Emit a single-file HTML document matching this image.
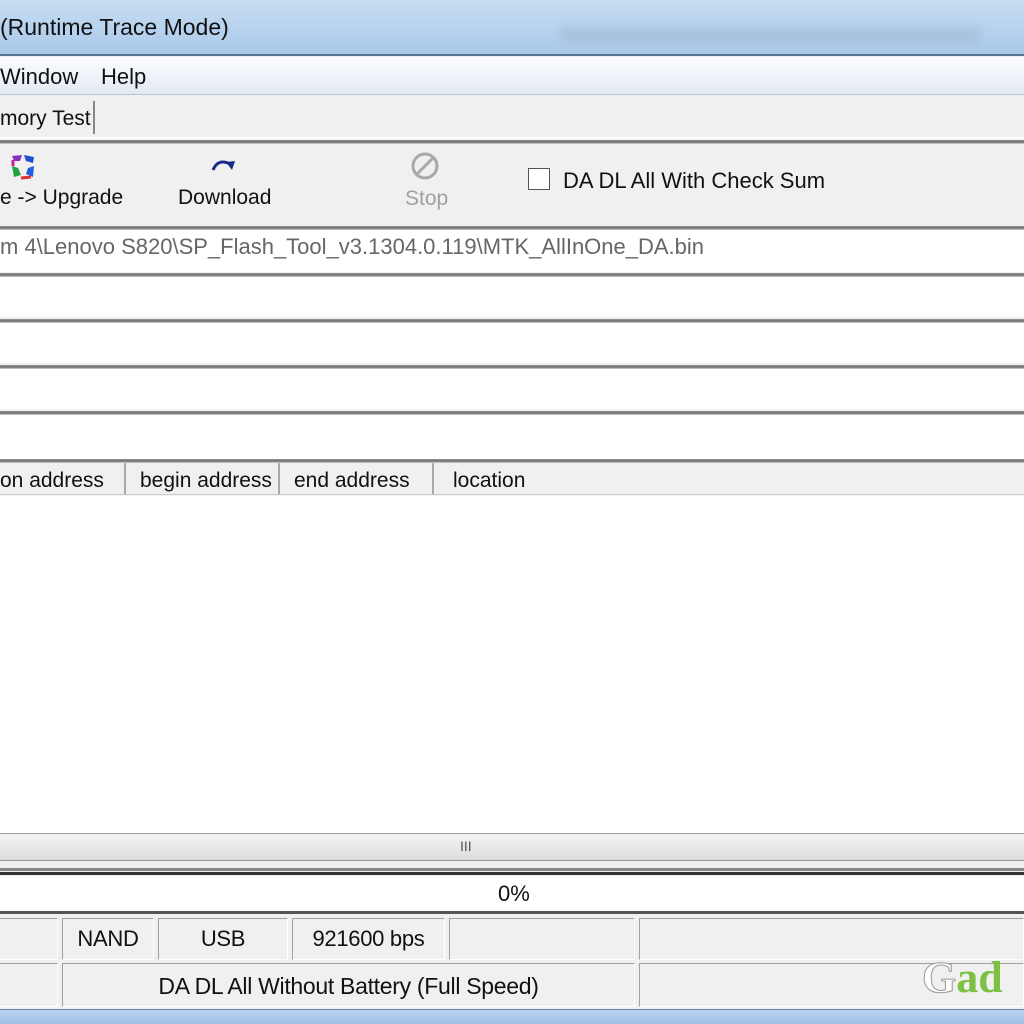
<!DOCTYPE html>
<html><head><style>
*{margin:0;padding:0;box-sizing:border-box}
body{width:1024px;height:1024px;overflow:hidden;background:#f0f0f0;font-family:"Liberation Sans",sans-serif;position:relative;color:#111}
.a{position:absolute}
.t{font-size:21px;white-space:nowrap}
.sep{position:absolute;left:0;width:1024px;height:4px;background:linear-gradient(#9a9a9a,#6a6a6a 50%,#d8d8d8)}
.cell{position:absolute;border:1px solid #a0a0a0;border-right-color:#fff;border-bottom-color:#fff;background:#f0f0f0;font-size:22px;text-align:center;line-height:40px;letter-spacing:-0.3px}
</style></head><body>
<div class="a" style="left:0;top:0;width:1024px;height:56px;background:linear-gradient(#c7ddf1,#b5d1ee 60%,#a9c8e8);border-bottom:2px solid #5b7493"></div>
<div class="a" style="left:560px;top:28px;width:420px;height:14px;background:#9fb6cf;filter:blur(5px);opacity:.6"></div>
<div class="a t" style="left:0;top:14px;font-size:23px">(Runtime Trace Mode)</div>
<div class="a" style="left:0;top:57px;width:1024px;height:38px;background:linear-gradient(#fbfcfe,#e3e9f3);border-bottom:1px solid #b8c4d4"></div>
<div class="a t" style="left:0;top:64px;font-size:22px">Window</div>
<div class="a t" style="left:101px;top:64px;font-size:22px">Help</div>
<div class="a t" style="left:0;top:107px">mory Test</div>
<div class="a" style="left:93px;top:101px;width:2px;height:33px;background:#888"></div>
<div class="a" style="left:0;top:137px;width:1024px;height:2px;background:#fff"></div>
<div class="sep" style="top:140px"></div>
<svg class="a" style="left:9px;top:152px" width="28" height="30" viewBox="0 0 28 30"><path d="M3 4 L13 3 L11 9 L5 9Z" fill="#8a2fc0"/><path d="M15 3 L25 5 L24 11 L17 9Z" fill="#2050d0"/><path d="M25 14 L24 25 L17 22 L19 16Z" fill="#2060e0"/><path d="M3 14 L5 25 L12 23 L9 16Z" fill="#20a040"/><path d="M12 26 L22 25" stroke="#e03030" stroke-width="3"/><path d="M4 8 L4 14" stroke="#d02090" stroke-width="3"/></svg>
<div class="a t" style="left:0;top:186px">e -&gt; Upgrade</div>
<svg class="a" style="left:210px;top:156px" width="28" height="18" viewBox="0 0 28 18"><path d="M3 14 Q8 2 20 8" stroke="#1a2a8a" stroke-width="3" fill="none"/><path d="M16 6 L25 5 L22 14Z" fill="#1a2a8a"/></svg>
<div class="a t" style="left:178px;top:186px">Download</div>
<svg class="a" style="left:410px;top:151px" width="30" height="30" viewBox="0 0 30 30"><circle cx="15" cy="15" r="12" stroke="#a8a8a8" stroke-width="3" fill="none"/><path d="M7 23 L23 7" stroke="#a8a8a8" stroke-width="3"/></svg>
<div class="a t" style="left:405px;top:187px;color:#a0a0a0">Stop</div>
<div class="a" style="left:528px;top:168px;width:22px;height:22px;border:1px solid #555;background:#fff"></div>
<div class="a t" style="left:563px;top:168px;font-size:22px">DA DL All With Check Sum</div>
<div class="sep" style="top:226px"></div>
<div class="a" style="left:0;top:230px;width:1024px;height:42px;background:#fff"></div>
<div class="a t" style="left:0;top:234px;color:#666;font-size:22px">m 4\Lenovo S820\SP_Flash_Tool_v3.1304.0.119\MTK_AllInOne_DA.bin</div>
<div class="sep" style="top:273px"></div>
<div class="a" style="left:0;top:277px;width:1024px;height:40px;background:#fff"></div>
<div class="sep" style="top:319px"></div>
<div class="a" style="left:0;top:323px;width:1024px;height:40px;background:#fff"></div>
<div class="sep" style="top:365px"></div>
<div class="a" style="left:0;top:369px;width:1024px;height:40px;background:#fff"></div>
<div class="sep" style="top:411px"></div>
<div class="a" style="left:0;top:415px;width:1024px;height:44px;background:#fff"></div>
<div class="sep" style="top:459px"></div>
<div class="a" style="left:0;top:463px;width:1024px;height:32px;background:#f0f0f0;border-bottom:1px solid #ccc"></div>
<div class="a" style="left:124px;top:463px;width:2px;height:31px;background:#aaa"></div>
<div class="a" style="left:278px;top:463px;width:2px;height:31px;background:#aaa"></div>
<div class="a" style="left:432px;top:463px;width:2px;height:31px;background:#aaa"></div>
<div class="a t" style="left:0;top:469px">on address</div>
<div class="a t" style="left:140px;top:469px">begin address</div>
<div class="a t" style="left:294px;top:469px">end address</div>
<div class="a t" style="left:453px;top:469px">location</div>
<div class="a" style="left:0;top:496px;width:1024px;height:337px;background:#fff"></div>
<div class="a" style="left:0;top:833px;width:1024px;height:28px;background:linear-gradient(#f4f4f4,#dcdcdc);border-top:1px solid #999;border-bottom:1px solid #999"></div>
<div class="a" style="left:460px;top:838px;font-size:14px;color:#555">III</div>
<div class="a" style="left:0;top:868px;width:1024px;height:3px;background:#888"></div>
<div class="a" style="left:0;top:872px;width:1024px;height:3px;background:#333"></div>
<div class="a" style="left:0;top:876px;width:1024px;height:35px;background:#fff"></div>
<div class="a t" style="left:498px;top:881px;font-size:22px">0%</div>
<div class="a" style="left:0;top:911px;width:1024px;height:3px;background:#555"></div>
<div class="cell" style="left:0;top:918px;width:58px;height:42px;border-left:none"></div>
<div class="cell" style="left:62px;top:918px;width:92px;height:42px">NAND</div>
<div class="cell" style="left:158px;top:918px;width:130px;height:42px">USB</div>
<div class="cell" style="left:292px;top:918px;width:153px;height:42px">921600 bps</div>
<div class="cell" style="left:449px;top:918px;width:186px;height:42px"></div>
<div class="cell" style="left:639px;top:918px;width:385px;height:42px"></div>
<div class="cell" style="left:0;top:963px;width:58px;height:44px;border-left:none"></div>
<div class="cell" style="left:62px;top:963px;width:573px;height:44px;line-height:44px;font-size:23px">DA DL All Without Battery (Full Speed)</div>
<div class="cell" style="left:639px;top:963px;width:385px;height:44px"></div>
<div class="a" style="left:922px;top:952px;font-family:'Liberation Serif',serif;font-weight:bold;font-size:44px;white-space:nowrap"><span style="color:#fff;-webkit-text-stroke:1px #999">G</span><span style="color:#7cc142">ad</span></div>
<div class="a" style="left:0;top:1009px;width:1024px;height:15px;background:linear-gradient(#b8d3ee,#9ec0e4);border-top:1px solid #6a86a8"></div>
</body></html>
